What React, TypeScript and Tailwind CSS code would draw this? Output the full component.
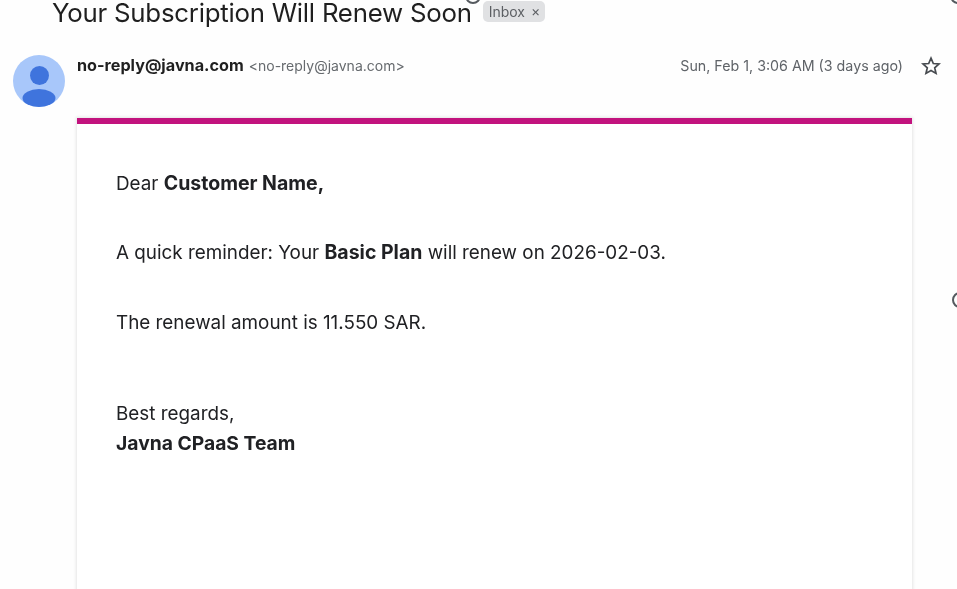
import React from "react";

function Avatar() {
  return (
    <svg width="52" height="52" viewBox="0 0 52 52" className="shrink-0">
      <circle cx="26" cy="26" r="26" fill="#a8c7fa" />
      <circle cx="26.5" cy="20.5" r="9.5" fill="#3f74dd" />
      <ellipse cx="26" cy="43" rx="16.5" ry="9" fill="#3f74dd" />
    </svg>
  );
}

function Star() {
  return (
    <svg width="20" height="20" viewBox="0 0 20 20" fill="none" stroke="#474b50" strokeWidth="1.7" strokeLinejoin="miter">
      <path d="M10 2.2l2.3 5.3 5.7.5-4.3 3.8 1.3 5.6L10 14.5l-5 2.9 1.3-5.6L2 8l5.7-.5z" />
    </svg>
  );
}

function Ring({ className }: { className: string }) {
  return <div className={"absolute w-[16px] h-[16px] rounded-full border-[2.5px] border-[#555a5f] " + className} />;
}

export default function App() {
  return (
    <div className="relative w-[957px] h-[589px] overflow-hidden bg-[#fefefe] text-[#1f1f1f] font-[Inter,sans-serif] blur-[0.35px]">
      <Ring className="left-[465px] top-[-12px]" />
      <Ring className="left-[950px] top-[-12px]" />
      <Ring className="left-[952px] top-[292px]" />

      <div className="flex items-center h-[26px] pl-[52px] gap-[11px]">
        <h1 className="text-[25.8px] leading-[26px] font-normal tracking-[-0.24px]">Your Subscription Will Renew Soon</h1>
        <span className="flex items-center gap-[6px] h-[21px] pl-[6px] pr-[5px] rounded-[5px] bg-[#e0e1e3] text-[14px] text-[#5c5f63] -translate-y-[2px]">
          Inbox <span className="text-[14px] leading-none">×</span>
        </span>
      </div>

      <div className="flex pl-[13px] pr-[16px] pt-[29px] gap-[12px]">
        <Avatar />
        <div className="flex-1 flex items-start justify-between pt-[1px]">
          <div className="flex items-baseline gap-[5px] h-[20px] -translate-y-[1px]">
            <span className="text-[16.2px] leading-[20px] font-bold">no-reply@javna.com</span>
            <span className="text-[14px] leading-[20px] text-[#666a6e]">&lt;no-reply@javna.com&gt;</span>
          </div>
          <div className="flex items-center gap-[18px] h-[20px]">
            <span className="text-[14.25px] text-[#5f6368]">Sun, Feb 1, 3:06 AM (3 days ago)</span>
            <Star />
          </div>
        </div>
      </div>

      <div className="ml-[77px] mt-[11px] w-[835px] h-[500px] bg-white border-t-[6px] border-[#c2137e] shadow-[0_0_3px_1px_rgba(0,0,0,0.1)] pl-[39px] pt-[47px] text-[18.85px] leading-[24px] text-[#202124]">
        <p>Dear <strong className="font-bold text-[19.5px]">Customer Name,</strong></p>
        <p className="mt-[44px]">A quick reminder: Your <strong className="font-bold text-[19.5px]">Basic Plan</strong> will renew on 2026-02-03.</p>
        <p className="mt-[46px]">The renewal amount is 11.550 SAR.</p>
        <p className="mt-[67px]">Best regards,</p>
        <p className="mt-[5px] font-bold text-[19.3px]">Javna CPaaS Team</p>
      </div>
    </div>
  );
}
